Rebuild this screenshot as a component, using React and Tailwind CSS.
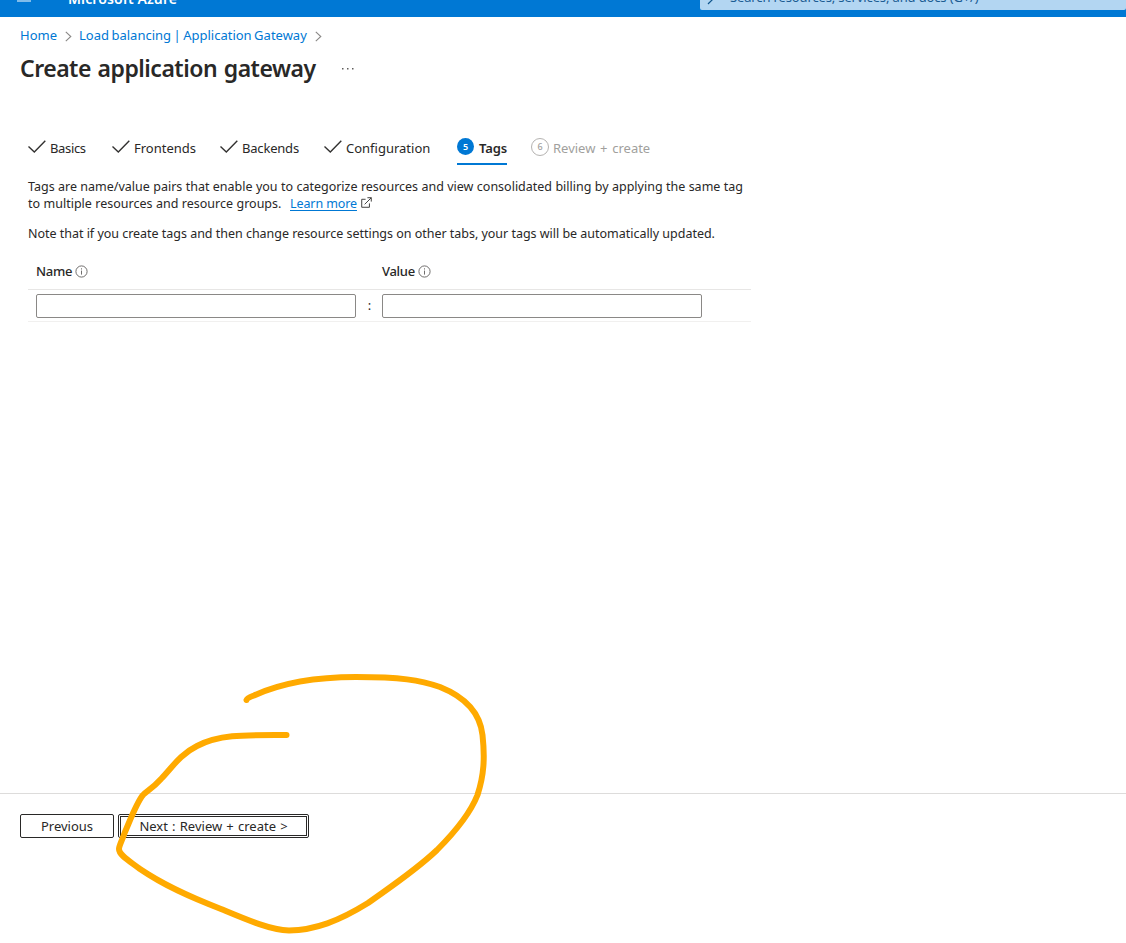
const Check = () => (
  <svg className="h-[14px] w-[18px] shrink-0" viewBox="0 0 18 14" fill="none" stroke="#323130" strokeWidth="1.4">
    <path d="M0.5 7.5 L6.3 12.9 L17.3 1.7" />
  </svg>
);

const Chevron = () => (
  <svg className="h-[11px] w-[7px] shrink-0" viewBox="0 0 7 11" fill="none" stroke="#8a8886" strokeWidth="1.1">
    <path d="M0.8 0.8 L5.8 5.5 L0.8 10.2" />
  </svg>
);

const Info = () => (
  <svg className="h-[13px] w-[13px] shrink-0" viewBox="0 0 13 13" fill="none" stroke="#605e5c">
    <circle cx="6.5" cy="6.5" r="5.6" strokeWidth="0.9" />
    <path d="M6.5 5.6V9.6M6.5 3.3V4.5" strokeWidth="0.9" />
  </svg>
);

const DoneTab = ({ label, className }) => (
  <div className={`flex h-[33px] shrink-0 items-start ${className}`}>
    <div className="pt-[7px]"><Check /></div>
    <span className="ml-1 pt-[6px] leading-[20px]">{label}</span>
  </div>
);

const FieldHead = ({ label, className }) => (
  <div className={`flex items-center gap-[3px] ${className}`}>
    <span className="font-medium tracking-[-0.3px]">{label}</span>
    <Info />
  </div>
);

export default function App() {
  return (
    <div className="relative flex h-[943px] w-[1126px] flex-col overflow-hidden bg-white font-['Noto_Sans',sans-serif] text-[13px] text-[#292827]">
      <header className="flex h-[17px] shrink-0 items-end overflow-hidden bg-[#0078d4]">
        <div className="mb-[15px] ml-[17px] h-[2px] w-[14px] bg-[#80bcea]" />
        <div className="mb-[8px] ml-[37px] w-[632px] text-[14px] font-semibold leading-[20px] tracking-[0.1px] text-white">Microsoft Azure</div>
        <div className="mb-[7px] flex h-[32px] flex-1 items-center rounded-[2px] bg-[#b3d6f2] pl-[7px] text-[#1b5c92]">
          <svg className="mt-[6px] h-[16px] w-[16px] shrink-0" viewBox="0 0 16 16" fill="none" stroke="#0f548c" strokeWidth="1.2">
            <circle cx="10" cy="6" r="4.5" />
            <path d="M6.8 9.2 L1 15" />
          </svg>
          <span className="ml-[7px] mt-[5px] leading-[20px] tracking-[-0.14px]">Search resources, services, and docs (G+/)</span>
        </div>
      </header>

      <nav className="mt-[9px] flex h-[20px] shrink-0 items-center pl-5 text-[#0078d4]">
        <span className="w-[45px]">Home</span>
        <Chevron />
        <span className="ml-[7px] w-[236px] whitespace-nowrap [word-spacing:-0.9px]">Load balancing | Application Gateway</span>
        <Chevron />
      </nav>

      <div className="mt-[6px] flex h-[32px] shrink-0 items-center pl-5">
        <h1 className="w-[322px] whitespace-nowrap text-[23px] font-semibold leading-[32px] tracking-[-0.5px] [word-spacing:1.2px]">Create application gateway</h1>
        <svg className="mt-px h-[2px] w-[12px]" viewBox="0 0 12 2" fill="#605e5c">
          <rect x="0" y="0" width="1.5" height="1.5" /><rect x="5" y="0" width="1.5" height="1.5" /><rect x="10" y="0" width="1.5" height="1.5" />
        </svg>
      </div>

      <div className="mt-[48px] flex h-[33px] shrink-0 whitespace-nowrap pl-7">
        <DoneTab label="Basics" className="w-[84px] tracking-[-0.35px]" />
        <DoneTab label="Frontends" className="w-[108px]" />
        <DoneTab label="Backends" className="w-[104px] tracking-[-0.2px]" />
        <DoneTab label="Configuration" className="w-[133px]" />
        <div className="flex h-[33px] w-[50px] items-start border-b-2 border-[#0078d4]">
          <span className="mt-[6px] flex h-[17px] w-[17px] shrink-0 items-center justify-center rounded-full bg-[#0078d4] text-[9px] font-semibold text-white">5</span>
          <span className="ml-[5px] pt-[6px] font-semibold leading-[20px] tracking-[-0.15px]">Tags</span>
        </div>
        <div className="ml-6 flex items-start text-[#a19f9d]">
          <span className="mt-[6px] flex h-[18px] w-[18px] shrink-0 items-center justify-center rounded-full border border-[#b5b3b1] text-[9px] font-medium">6</span>
          <span className="ml-1 pt-[6px] leading-[20px] [word-spacing:1.3px]">Review + create</span>
        </div>
      </div>

      <main className="flex flex-col pl-7">
        <p className="mt-[13px] whitespace-nowrap text-[12.5px] leading-[17px] [word-spacing:0.12px]">
          Tags are name/value pairs that enable you to categorize resources and view consolidated billing by applying the same tag
        </p>
        <p className="flex items-center whitespace-nowrap text-[12.5px] leading-[17px]">
          <span className="w-[262px] [word-spacing:0.2px]">to multiple resources and resource groups.</span>
          <a className="w-[71px] tracking-[-0.1px] text-[#0078d4] underline underline-offset-2">Learn more</a>
          <svg className="-mt-[3px] h-[11px] w-[11px]" viewBox="0 0 12 12" fill="none" stroke="#323130">
            <path d="M5 2.5H0.8V11.2H9.2V7M7 0.8H11.2V5M11.2 0.8L4 8" />
          </svg>
        </p>
        <p className="mt-[13px] whitespace-nowrap text-[12.5px] leading-[17px] tracking-[-0.022px]">
          Note that if you create tags and then change resource settings on other tabs, your tags will be automatically updated.
        </p>
        <div className="mt-[12px] flex h-[36px] w-[723px] items-center border-b border-[#e7e6e5] pl-2">
          <FieldHead label="Name" className="w-[346px]" />
          <FieldHead label="Value" className="" />
        </div>
        <div className="flex h-[32px] w-[723px] items-center border-b border-[#f1f0ef] pl-2">
          <input aria-label="Name" className="h-6 w-[320px] rounded-[2px] border border-[#8a8886] outline-none" />
          <span className="w-[26px] pl-px text-center">:</span>
          <input aria-label="Value" className="h-6 w-[320px] rounded-[2px] border border-[#8a8886] outline-none" />
        </div>
      </main>

      <footer className="mt-auto flex h-[150px] shrink-0 items-start gap-1 whitespace-nowrap border-t border-[#dddcdb] pl-5 pt-5">
        <button className="h-6 w-[94px] rounded-[2px] border border-[#292827] pt-[2px]">Previous</button>
        <button className="h-6 w-[191px] rounded-[2px] border border-[#292827] p-px">
          <span className="flex h-full w-full items-center justify-center border border-[#292827] pt-[2px] [word-spacing:0.8px]">Next : Review + create &gt;</span>
        </button>
      </footer>

      <svg className="pointer-events-none absolute left-0 top-0 h-[943px] w-[1126px]" viewBox="0 0 1126 943" fill="none" stroke="#ffaa00" strokeWidth="6" strokeLinecap="round" strokeLinejoin="round">
        <path d="M246.500 700C247 698 250 697 254 695.500C279 684 311 677 356 677C400 677 420 680 440 687C465 697 480 713 482.500 735C485 758 484 775 477.500 795C470 814 451 836 437 850C416 870 396 883 368 903C339 921 315 930 289 930.500C270 930 245 919 221 909C190 897 165 886 140 869C128 860 119 855 119 849C119 846 121 843 125 832C131 818 137 802 143 795C147 791 153 788 161 779C172 768 179 755 197 746C220 734 246 735 286.500 735" />
      </svg>
    </div>
  );
}
